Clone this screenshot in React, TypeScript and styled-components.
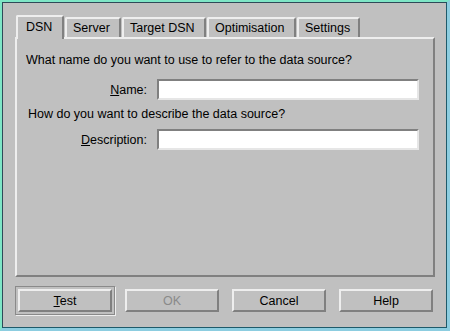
import React from "react";
import styled, { createGlobalStyle } from "styled-components";

const GlobalStyle = createGlobalStyle`
  html, body {
    margin: 0;
    padding: 0;
    background: #c0c0c0;
  }
  body {
    font-family: "Liberation Sans", Arial, sans-serif;
    font-size: 12.5px;
    color: #000;
  }
`;

const tabs = [
  { label: "DSN", width: 48 },
  { label: "Server", width: 56 },
  { label: "Target DSN", width: 84 },
  { label: "Optimisation", width: 89 },
  { label: "Settings", width: 63 },
];

export default function App() {
  return (
    <>
      <GlobalStyle />
      <Window>
        <Inner>
          <TabBar>
            {tabs.map((t, i) => (
              <Tab key={t.label} $active={i === 0} $width={t.width}>
                {t.label}
              </Tab>
            ))}
          </TabBar>
          <Pane>
            <Question>What name do you want to use to refer to the data source?</Question>
            <FieldRow>
              <Label>
                <u>N</u>ame:
              </Label>
              <Input type="text" />
            </FieldRow>
            <Question $shift={2} $top={7}>
              How do you want to describe the data source?
            </Question>
            <FieldRow $top={8}>
              <Label>
                <u>D</u>escription:
              </Label>
              <Input type="text" />
            </FieldRow>
          </Pane>
          <ButtonRow>
            <Button $focused>
              <u>T</u>est
            </Button>
            <Button disabled>OK</Button>
            <Button>Cancel</Button>
            <Button>Help</Button>
          </ButtonRow>
        </Inner>
      </Window>
    </>
  );
}

const Window = styled.div`
  width: 450px;
  height: 331px;
  box-sizing: border-box;
  border-style: solid;
  border-width: 2px 3px 3px 2px;
  border-color: #7ee6c6 #8ccde0 #8ccde0 #7ee6c6;
`;

const Inner = styled.div`
  height: 100%;
  box-sizing: border-box;
  border: 1px solid;
  border-color: #2e4a58 #1e5a6a #1e5a6a #2e4a58;
  padding: 12px 11px 0 12px;
  display: flex;
  flex-direction: column;
`;

const TabBar = styled.div`
  display: flex;
  align-items: flex-end;
  height: 22px;
  padding-left: 1px;
  position: relative;
  z-index: 1;
`;

const Tab = styled.div<{ $active?: boolean; $width: number }>`
  box-sizing: border-box;
  width: ${(p) => p.$width}px;
  height: ${(p) => (p.$active ? 24 : 20)}px;
  margin-bottom: ${(p) => (p.$active ? -2 : 0)}px;
  margin-right: 1px;
  padding-left: ${(p) => (p.$active ? 8 : 6)}px;
  padding-top: ${(p) => (p.$active ? 3 : 2)}px;
  line-height: 14px;
  background: #c0c0c0;
  border-top: 2px solid #eeeeee;
  border-left: 2px solid #eeeeee;
  border-right: 2px solid #808080;
  border-radius: 2px 2px 0 0;
  white-space: nowrap;
`;

const Pane = styled.div`
  box-sizing: border-box;
  height: 240px;
  border: 2px solid;
  border-color: #eeeeee #808080 #808080 #eeeeee;
  padding: 14px 14px 0 9px;
  display: flex;
  flex-direction: column;
`;

const Question = styled.div<{ $shift?: number; $top?: number }>`
  line-height: 14px;
  margin-left: ${(p) => p.$shift || 0}px;
  margin-top: ${(p) => p.$top || 0}px;
  white-space: nowrap;
`;

const FieldRow = styled.div<{ $top?: number }>`
  display: grid;
  grid-template-columns: 121px 1fr;
  column-gap: 10px;
  align-items: center;
  margin-top: ${(p) => p.$top ?? 12}px;
`;

const Label = styled.label`
  text-align: right;
  line-height: 14px;
`;

const Input = styled.input`
  box-sizing: border-box;
  height: 21px;
  width: 100%;
  margin: 0;
  padding: 0 3px;
  background: #ffffff;
  border-style: solid;
  border-width: 2px;
  border-color: #808080 #e6e6e6 #e6e6e6 #808080;
  font: inherit;
  outline: none;
`;

const ButtonRow = styled.div`
  display: flex;
  gap: 13px;
  margin-top: 12px;
  padding-left: 3px;
`;

const Button = styled.button<{ $focused?: boolean }>`
  box-sizing: border-box;
  width: 94px;
  height: 23px;
  margin: 0;
  padding: 0;
  background: #c0c0c0;
  border-style: solid;
  border-width: 2px;
  border-color: #eeeeee #808080 #808080 #eeeeee;
  font-family: "Liberation Sans", Arial, sans-serif;
  font-size: 12.5px;
  color: #000;
  outline: ${(p) => (p.$focused ? "1px solid #8a8a8a" : "none")};
  outline-offset: 2px;
  box-shadow: ${(p) =>
    p.$focused ? "0 0 0 3px #c0c0c0, 1px 1px 0 3px #eeeeee" : "none"};

  &:disabled {
    color: #8a8a8a;
  }
`;
